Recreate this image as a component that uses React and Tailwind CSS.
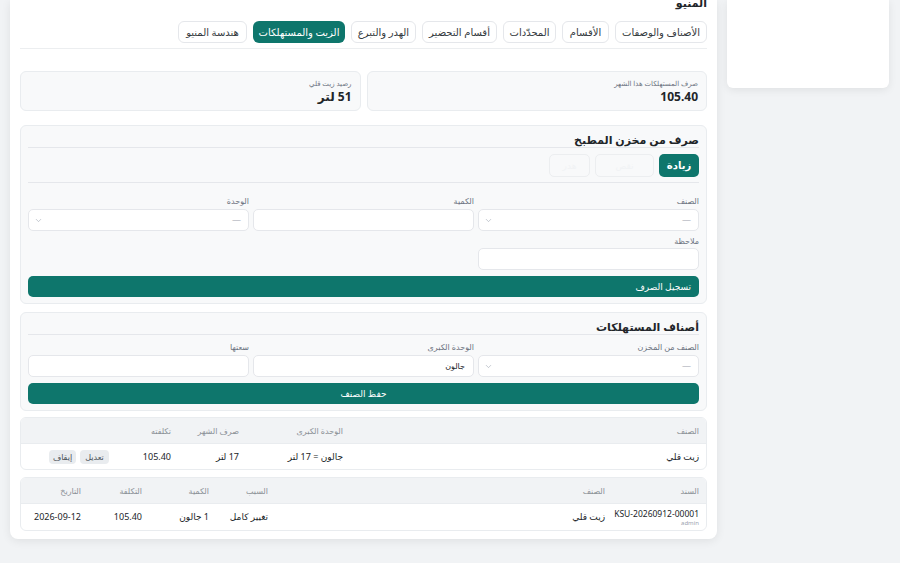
import { ChevronDown } from 'lucide-react';

const tabs = [
  { label: 'الأصناف والوصفات', w: 'w-[92px]' },
  { label: 'الأقسام', w: 'w-[47px]' },
  { label: 'المحدّدات', w: 'w-[53px]' },
  { label: 'أقسام التحضير', w: 'w-[75px]' },
  { label: 'الهدر والتبرع', w: 'w-[65px]' },
  { label: 'الزيت والمستهلكات', w: 'w-[92px]', active: true },
  { label: 'هندسة المنيو', w: 'w-[69px]' },
];

function Label({ children }) {
  return <div className="h-[10px] leading-[10px] text-[8px] text-[#6b7280] mb-[3px]">{children}</div>;
}

function Select({ value = '—' }) {
  return (
    <div className="h-[22px] bg-white border border-[#e5e7eb] rounded-[5px] flex items-center justify-between pr-[7px] pl-[5px]">
      <span className="text-[9px] text-[#9ca3af]">{value}</span>
      <ChevronDown size={9} strokeWidth={1.5} className="text-[#9ca3af]" />
    </div>
  );
}

function Input({ value }) {
  return (
    <div className="h-[22px] bg-white border border-[#e5e7eb] rounded-[5px] flex items-center pr-[8px]">
      {value && <span className="text-[8px] text-[#212529]">{value}</span>}
    </div>
  );
}

function Section({ title, children }) {
  return (
    <div className="bg-[#f8f9fa] border border-[#e9ecef] rounded-[6px] px-[7px] pt-[6px] pb-[6px]">
      <div className="h-[16px] leading-[16px] text-[11px] font-bold text-[#212529] border-b border-[#e5e7eb]">{title}</div>
      {children}
    </div>
  );
}

function PrimaryButton({ children, align = 'center' }) {
  return (
    <button
      type="button"
      className={`w-full h-[21px] mt-[6px] rounded-[5px] bg-[#0e766c] text-white text-[9px] flex items-center px-[8px] ${
        align === 'center' ? 'justify-center' : 'justify-start'
      }`}
    >
      {children}
    </button>
  );
}

export default function App() {
  return (
    <div
      dir="rtl"
      className="min-h-[563px] bg-[#f1f3f5] flex items-start gap-[10px] pr-[11px] pl-[10px] overflow-hidden"
      style={{ fontFamily: '"Noto Sans", "DejaVu Sans", sans-serif' }}
    >
      {/* side panel */}
      <div className="w-[162px] h-[88px] shrink-0 bg-white rounded-b-[6px] shadow-[0_2px_8px_rgba(0,0,0,0.08)]" />

      {/* main card */}
      <div className="w-[707px] shrink-0 bg-white rounded-b-[8px] shadow-[0_2px_10px_rgba(0,0,0,0.08)] px-[10px] pb-[8px] overflow-hidden">
        <div className="h-[10px] leading-[6px] text-[11px] font-bold text-[#212529] overflow-hidden">المنيو</div>

        <div className="flex gap-[6px] mt-[11px] pb-[5px] border-b border-[#eceef0]">
          {tabs.map((t) => (
            <button
              key={t.label}
              type="button"
              className={`${t.w} h-[22px] rounded-[6px] text-[10px] whitespace-nowrap flex items-center justify-center ${
                t.active
                  ? 'bg-[#0e766c] text-white'
                  : 'bg-white border border-[#e5e7eb] text-[#343a40]'
              }`}
            >
              {t.label}
            </button>
          ))}
        </div>

        {/* summary */}
        <div className="grid grid-cols-2 gap-[6px] mt-[22px]">
          <div className="h-[40px] bg-[#f8f9fa] border border-[#e9ecef] rounded-[6px] pr-[8px] pt-[7px]">
            <div className="text-[7px] leading-[9px] text-[#6b7280]">صرف المستهلكات هذا الشهر</div>
            <div className="text-[12px] leading-[16px] font-bold text-[#212529] mt-[1px]">105.40</div>
          </div>
          <div className="h-[40px] bg-[#f8f9fa] border border-[#e9ecef] rounded-[6px] pr-[8px] pt-[7px]">
            <div className="text-[7px] leading-[9px] text-[#6b7280]">رصيد زيت قلي</div>
            <div className="text-[12px] leading-[16px] font-bold text-[#212529] mt-[1px]">51 لتر</div>
          </div>
        </div>

        {/* section 1 */}
        <div className="mt-[14px]">
          <Section title="صرف من مخزن المطبخ">
            <div className="flex gap-[5px] mt-[6px] pb-[5px] border-b border-[#e5e7eb]">
              <button type="button" className="w-[40px] h-[23px] rounded-[5px] bg-[#0e766c] text-white text-[10px] font-bold">
                زيادة
              </button>
              <button type="button" className="w-[59px] h-[23px] rounded-[5px] bg-[#f8f9fa] border border-[#eceef0] text-[9px] text-[#f1f3f5]">
                نقص
              </button>
              <button type="button" className="w-[41px] h-[23px] rounded-[5px] bg-[#f8f9fa] border border-[#eceef0] text-[9px] text-[#f1f3f5]">
                هدر
              </button>
            </div>
            <div className="grid grid-cols-3 gap-[4px] mt-[13px]">
              <div>
                <Label>الصنف</Label>
                <Select />
              </div>
              <div>
                <Label>الكمية</Label>
                <Input />
              </div>
              <div>
                <Label>الوحدة</Label>
                <Select />
              </div>
            </div>
            <div className="grid grid-cols-3 gap-[4px] mt-[5px]">
              <div>
                <div className="h-[10px] leading-[10px] text-[8px] text-[#6b7280] mb-[2px]">ملاحظة</div>
                <Input />
              </div>
            </div>
            <PrimaryButton align="start">تسجيل الصرف</PrimaryButton>
          </Section>
        </div>

        {/* section 2 */}
        <div className="mt-[8px]">
          <Section title="أصناف المستهلكات">
            <div className="grid grid-cols-3 gap-[4px] mt-[7px]">
              <div>
                <Label>الصنف من المخزن</Label>
                <Select />
              </div>
              <div>
                <Label>الوحدة الكبرى</Label>
                <Input value="جالون" />
              </div>
              <div>
                <Label>سعتها</Label>
                <Input />
              </div>
            </div>
            <PrimaryButton>حفظ الصنف</PrimaryButton>
          </Section>
        </div>

        {/* table 1 */}
        <div className="mt-[6px] border border-[#e9ecef] rounded-[6px] overflow-hidden">
          <div className="grid grid-cols-[356px_104px_68px_62px_1fr] h-[25px] items-center bg-[#f1f3f5] text-[8px] text-[#8a9096]">
            <div className="pr-[7px]">الصنف</div>
            <div className="pr-[7px]">الوحدة الكبرى</div>
            <div className="pr-[7px]">صرف الشهر</div>
            <div className="pr-[7px]">تكلفته</div>
            <div />
          </div>
          <div className="grid grid-cols-[356px_104px_68px_62px_1fr] h-[26px] items-center text-[9px] text-[#212529] border-t border-[#e9ecef]">
            <div className="pr-[7px]">زيت قلي</div>
            <div className="pr-[7px]">جالون = 17 لتر</div>
            <div className="pr-[7px]">17 لتر</div>
            <div className="pr-[7px]">105.40</div>
            <div className="pr-[7px] flex gap-[4px]">
              <button type="button" className="w-[29px] h-[14px] rounded-[4px] bg-[#e9ecef] text-[8px] text-[#495057]">
                تعديل
              </button>
              <button type="button" className="w-[27px] h-[14px] rounded-[4px] bg-[#e9ecef] text-[8px] text-[#495057]">
                إيقاف
              </button>
            </div>
          </div>
        </div>

        {/* table 2 */}
        <div className="mt-[7px] border border-[#e9ecef] rounded-[6px] overflow-hidden">
          <div className="grid grid-cols-[94px_337px_59px_67px_61px_1fr] h-[25px] items-center bg-[#f1f3f5] text-[8px] text-[#8a9096]">
            <div className="pr-[7px]">السند</div>
            <div className="pr-[7px]">الصنف</div>
            <div className="pr-[7px]">السبب</div>
            <div className="pr-[7px]">الكمية</div>
            <div className="pr-[7px]">التكلفة</div>
            <div className="pr-[7px]">التاريخ</div>
          </div>
          <div className="grid grid-cols-[94px_337px_59px_67px_61px_1fr] h-[27px] items-center text-[9px] text-[#212529] border-t border-[#e9ecef]">
            <div className="pr-[7px]">
              <div dir="ltr" className="text-right leading-[11px] text-[8.5px]">KSU-20260912-00001</div>
              <div className="text-[6px] leading-[8px] text-[#9ca3af]">admin</div>
            </div>
            <div className="pr-[7px]">زيت قلي</div>
            <div className="pr-[7px]">تغيير كامل</div>
            <div className="pr-[7px]">1 جالون</div>
            <div className="pr-[7px]">105.40</div>
            <div className="pr-[7px]">2026-09-12</div>
          </div>
        </div>
      </div>
    </div>
  );
}
